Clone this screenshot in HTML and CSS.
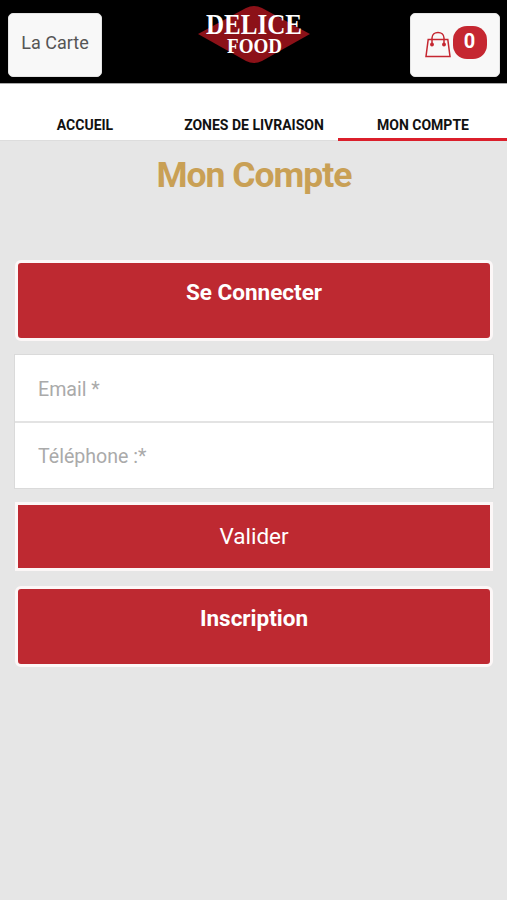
FILE: index.html
```html
<!DOCTYPE html>
<html lang="fr">
<head>
<meta charset="utf-8">
<meta name="viewport" content="width=device-width, initial-scale=1">
<title>Mon Compte</title>
<link rel="stylesheet" href="styles.css">
</head>
<body>
<header class="topbar">
  <a class="box menu">La Carte</a>
  <svg class="logo" viewBox="0 0 114 60" role="img">
    <path d="M1 29 49 3Q57-1 65 3L113 29 65 56Q57 60 49 56Z" fill="#8c1118"/>
    <text x="57" y="29.300" textLength="96" lengthAdjust="spacingAndGlyphs" class="brand-big">DELICE</text>
    <text x="57.500" y="48" textLength="55" lengthAdjust="spacingAndGlyphs" class="brand-small">FOOD</text>
  </svg>
  <a class="box cart">
    <svg class="bag" viewBox="0 0 26 28" fill="none" stroke="#c52731" stroke-width="1.500">
      <path d="M3.200 9.500H22.800L25 26.500H1Z"/>
      <path d="M7 14V8C7 0.500 19 0.500 19 8V14"/>
      <circle cx="7" cy="14.500" r="1.200" fill="#c52731"/>
      <circle cx="19" cy="14.500" r="1.200" fill="#c52731"/>
    </svg>
    <span class="count">0</span>
  </a>
</header>
<nav class="tabs">
  <a class="tab">ACCUEIL</a>
  <a class="tab">ZONES DE LIVRAISON</a>
  <a class="tab active">MON COMPTE</a>
</nav>
<main>
  <h1>Mon Compte</h1>
  <button class="btn heading">Se Connecter</button>
  <form class="fields">
    <input type="text" placeholder="Email *">
    <input type="text" placeholder="Téléphone :*">
  </form>
  <button class="btn submit">Valider</button>
  <button class="btn heading">Inscription</button>
</main>
</body>
</html>
```
FILE: styles.css
```css
* { box-sizing: border-box; }
body {
  margin: 0;
  min-height: 900px;
  background: #e6e6e6;
  font-family: Roboto, sans-serif;
}
.topbar {
  display: flex;
  justify-content: space-between;
  align-items: flex-start;
  height: 84px;
  padding: 0 7px 0 8px;
  background: #000;
  border-bottom: 1px solid #aaa;
}
.box {
  display: flex;
  justify-content: center;
  height: 64px;
  margin-top: 13px;
  background: #f8f8f8;
  border: 1px solid #e4e4e4;
  border-radius: 5px;
}
.menu {
  width: 94px;
  padding-top: 18px;
  font-size: 18px;
  line-height: 22px;
  color: #555;
}
.logo {
  width: 114px;
  height: 60px;
  margin: 5px 0 0 -4px;
  overflow: visible;
}
.brand-big, .brand-small {
  font-family: "Liberation Serif", serif;
  font-weight: 700;
  text-anchor: middle;
  fill: #fff;
}
.brand-big { font-size: 29px; }
.brand-small { font-size: 21px; }
.cart {
  width: 90px;
  padding: 12px 0 0 1px;
  gap: 2px;
}
.bag {
  width: 26px;
  height: 28px;
  margin-top: 4px;
}
.count {
  width: 34px;
  height: 33px;
  border-radius: 14px;
  background: #c52731;
  color: #fff;
  font-size: 20px;
  font-weight: 700;
  line-height: 31px;
  text-align: center;
}
.tabs {
  display: grid;
  grid-template-columns: repeat(3, 1fr);
  height: 57px;
  background: #fff;
  border-bottom: 1px solid #ddd;
}
.tab {
  height: 57px;
  padding: 32px 0 0 1px;
  font-size: 14px;
  font-weight: 700;
  line-height: 18px;
  text-align: center;
  white-space: nowrap;
  color: #111;
}
.active { border-bottom: 3px solid #db1f2b; }
main {
  display: flex;
  flex-direction: column;
  padding: 0 13px 0 14px;
}
h1 {
  margin: 12px 0 86px;
  font-size: 35.5px;
  letter-spacing: -1px;
  line-height: 44px;
  height: 21px;
  text-align: center;
  color: #c9a055;
}
.btn {
  margin: 0 1px;
  padding: 0 0 1px;
  border: 3px solid #fcf7f7;
  background: #be2931;
  color: #fff;
  font-family: inherit;
  font-size: 22.5px;
}
.heading {
  height: 81px;
  padding-bottom: 18px;
  border-radius: 6px;
  font-weight: 700;
}
.submit {
  height: 69px;
  margin-bottom: 15px;
}
.fields {
  display: flex;
  flex-direction: column;
  margin: 13px 0;
  border: 1px solid #dadada;
}
.fields input {
  height: 66px;
  padding: 2px 23px 0;
  border: 0;
  border-radius: 0;
  background: #fff;
  font: 19.6px Roboto, sans-serif;
}
.fields input + input {
  height: 67px;
  padding-top: 1px;
  border-top: 2px solid #e3e3e3;
}
.fields input::placeholder { color: #aaa; }
```
